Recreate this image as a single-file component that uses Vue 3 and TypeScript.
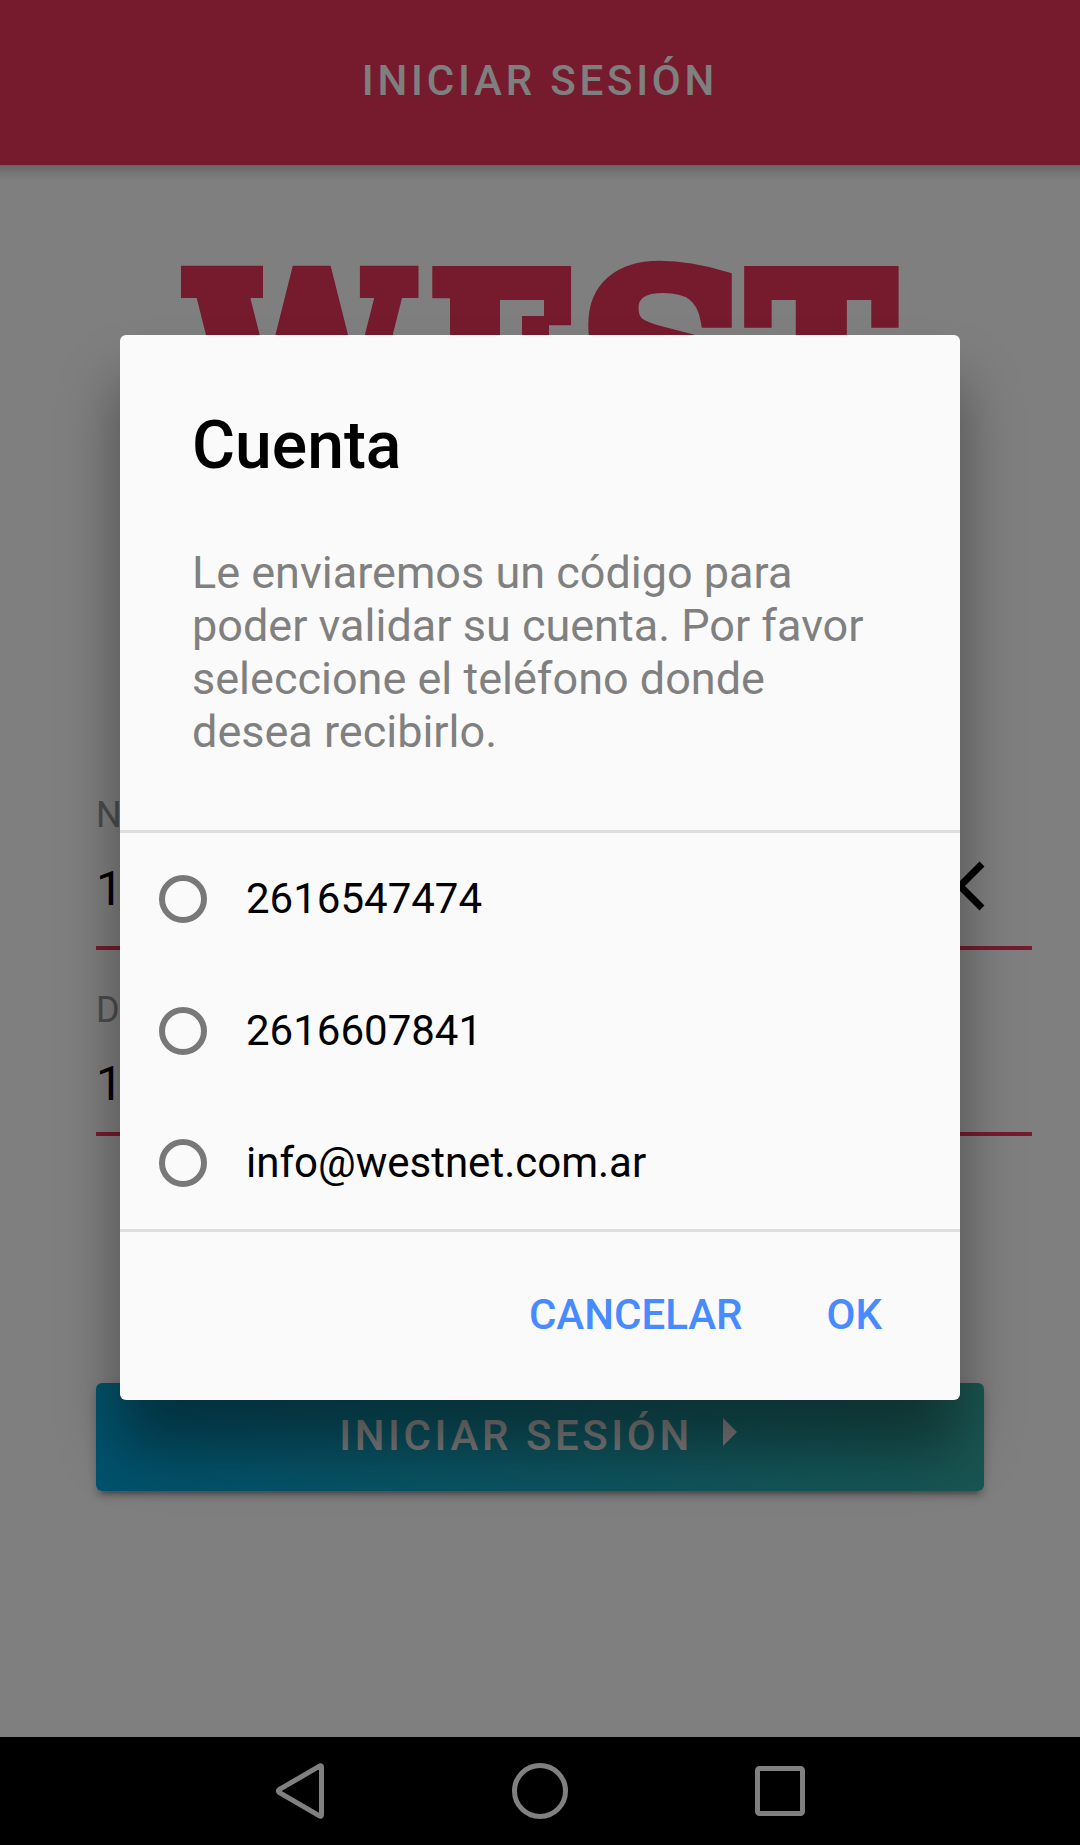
<script setup lang="ts">
interface Option {
  id: number
  label: string
}
interface Field {
  id: number
  label: string
  value: string
  clearable: boolean
}

const fields: Field[] = [
  { id: 1, label: 'N', value: '1', clearable: true },
  { id: 2, label: 'D', value: '1', clearable: false },
]

const options: Option[] = [
  { id: 1, label: '2616547474' },
  { id: 2, label: '2616607841' },
  { id: 3, label: 'info@westnet.com.ar' },
]
</script>

<template>
  <div class="device">
    <div class="page">
      <header class="toolbar"><h1 class="toolbar-title">INICIAR SESIÓN</h1></header>
      <main class="content">
        <svg class="logo" width="740" height="250" viewBox="0 0 740 250" role="img">
          <g class="logo-text">
            <text transform="translate(19 204.5) scale(0.812 1)" x="0" y="0">W</text>
            <text transform="translate(259.4 204.5) scale(0.792 1)" x="0" y="0">E</text>
            <text transform="translate(410.8 203) scale(0.956 1)" x="0" y="0">S</text>
            <text transform="translate(578.2 204.5) scale(0.807 1)" x="0" y="0">T</text>
          </g>
        </svg>
        <form class="form">
          <div v-for="f in fields" :key="f.id" class="field" :class="{ first: f.clearable }">
            <label class="field-label">{{ f.label }}</label>
            <div class="field-row">
              <span class="field-value">{{ f.value }}</span>
              <svg v-if="f.clearable" class="clear" width="50" height="50" viewBox="0 0 50 50">
                <path d="M3 3 L47 47 M47 3 L3 47" />
              </svg>
            </div>
          </div>
        </form>
        <button class="login" type="button">
          <span>INICIAR SESIÓN</span>
          <svg class="caret" width="14" height="28" viewBox="0 0 14 28"><path d="M0 0 L14 14 L0 28 Z" /></svg>
        </button>
      </main>
    </div>

    <div class="backdrop">
      <section class="alert">
        <h2 class="alert-title">Cuenta</h2>
        <p class="alert-message">Le enviaremos un código para poder validar su cuenta. Por favor seleccione el teléfono donde desea recibirlo.</p>
        <ul class="options">
          <li v-for="o in options" :key="o.id" class="option">
            <span class="radio"></span>
            <span class="option-label">{{ o.label }}</span>
          </li>
        </ul>
        <div class="actions">
          <button class="action" type="button">CANCELAR</button>
          <button class="action" type="button">OK</button>
        </div>
      </section>
    </div>

    <nav class="system">
      <svg width="60" height="60" viewBox="0 0 60 60"><path d="M51.5 6 L51.5 54 Q51.5 56 49.5 54.8 L9.5 31.6 Q7 30 9.5 28.4 L49.5 5.2 Q51.5 4 51.5 6 Z" /></svg>
      <svg width="60" height="60" viewBox="0 0 60 60"><circle cx="30" cy="30" r="25.5" /></svg>
      <svg width="60" height="60" viewBox="0 0 60 60"><rect x="7.5" y="7.5" width="45" height="45" rx="2" /></svg>
    </nav>
  </div>
</template>

<style>
body {
  margin: 0;
}
</style>

<style scoped>
.device {
  position: relative;
  display: flex;
  flex-direction: column;
  width: 1080px;
  height: 1845px;
  overflow: hidden;
  font-family: Roboto, sans-serif;
}
.page {
  display: flex;
  flex-direction: column;
  height: 1737px;
  background: #fff;
}
.toolbar {
  display: flex;
  align-items: center;
  justify-content: center;
  box-sizing: border-box;
  height: 165px;
  padding-bottom: 4px;
  background: #ec365c;
}
.toolbar-title {
  margin: 0;
  font-size: 42px;
  font-weight: 500;
  letter-spacing: 3.8px;
  line-height: 50px;
  color: #fff;
}
.content {
  display: flex;
  flex-direction: column;
  flex: 1;
  background: linear-gradient(rgba(0, 0, 0, 0.2), rgba(0, 0, 0, 0.06) 9px, transparent 17px);
}
.logo {
  flex: none;
  margin: 80px 0 0 171px;
}
.logo-text {
  fill: #ec365c;
  stroke: #ec365c;
  stroke-width: 18px;
  font-family: "DejaVu Serif", serif;
  font-size: 240px;
  font-weight: 700;
}
.form {
  margin: 299px 48px 0 96px;
}
.field {
  box-sizing: border-box;
  height: 186px;
  border-bottom: 4px solid #ec365c;
}
.field.first {
  height: 156px;
}
.field:not(.first) {
  padding-top: 39px;
}
.field-label {
  display: block;
  font-size: 36px;
  line-height: 42px;
  color: #999;
}
.field-row {
  display: flex;
  align-items: center;
  justify-content: space-between;
  height: 56px;
  margin-top: 24px;
  padding-right: 47px;
}
.field-value {
  padding-top: 2px;
  font-size: 48px;
  line-height: 56px;
  color: #000;
}
.clear {
  margin-top: -4px;
}
.clear path {
  fill: none;
  stroke: #000;
  stroke-width: 7px;
}
.login {
  display: flex;
  align-items: center;
  justify-content: center;
  box-sizing: border-box;
  width: 888px;
  height: 108px;
  margin: 247px 0 0 96px;
  padding: 0 4px 4px 0;
  border: 0;
  border-radius: 6px;
  background: linear-gradient(45deg, #00a4dc, #36aa9e);
  box-shadow: 0 9px 3px -6px rgba(0, 0, 0, 0.2), 0 6px 6px rgba(0, 0, 0, 0.14), 0 3px 15px rgba(0, 0, 0, 0.12);
  font-family: inherit;
  font-size: 42px;
  font-weight: 500;
  letter-spacing: 3.6px;
  color: #fff;
}
.caret {
  margin: -6px 0 0 30px;
  fill: #fff;
}
.backdrop {
  position: absolute;
  inset: 0 0 108px;
  display: flex;
  align-items: center;
  justify-content: center;
  padding-bottom: 2px;
  background: rgba(0, 0, 0, 0.5);
}
.alert {
  display: flex;
  flex-direction: column;
  width: 840px;
  height: 1065px;
  border-radius: 6px;
  background: #fafafa;
  box-shadow: 0 48px 60px rgba(0, 0, 0, 0.4);
  color: #000;
}
.alert-title {
  margin: 0;
  padding: 72px 72px 0;
  font-size: 66px;
  font-weight: 500;
  line-height: 78px;
}
.alert-message {
  margin: 0;
  padding: 61px 72px 0;
  height: 283px;
  box-sizing: border-box;
  font-size: 45px;
  line-height: 53px;
  color: #808080;
}
.options {
  margin: 62px 0 0;
  padding: 0;
  list-style: none;
  border-top: 3px solid #dedede;
  border-bottom: 3px solid #dedede;
}
.option {
  display: flex;
  align-items: center;
  gap: 39px;
  height: 132px;
  padding-left: 39px;
  font-size: 42px;
}
.option-label {
  padding-bottom: 2px;
}
.radio {
  box-sizing: border-box;
  width: 48px;
  height: 48px;
  border: 6px solid #787878;
  border-radius: 50%;
}
.actions {
  display: flex;
  justify-content: flex-end;
  gap: 84px;
  padding: 58px 78px 0 0;
}
.action {
  padding: 0;
  border: 0;
  background: none;
  font-family: inherit;
  font-size: 42px;
  font-weight: 500;
  line-height: 50px;
  color: #488aff;
}
.system {
  display: flex;
  align-items: center;
  justify-content: center;
  gap: 180px;
  height: 108px;
  background: #000;
}
.system svg {
  fill: none;
  stroke: #808080;
  stroke-width: 5px;
}
</style>
